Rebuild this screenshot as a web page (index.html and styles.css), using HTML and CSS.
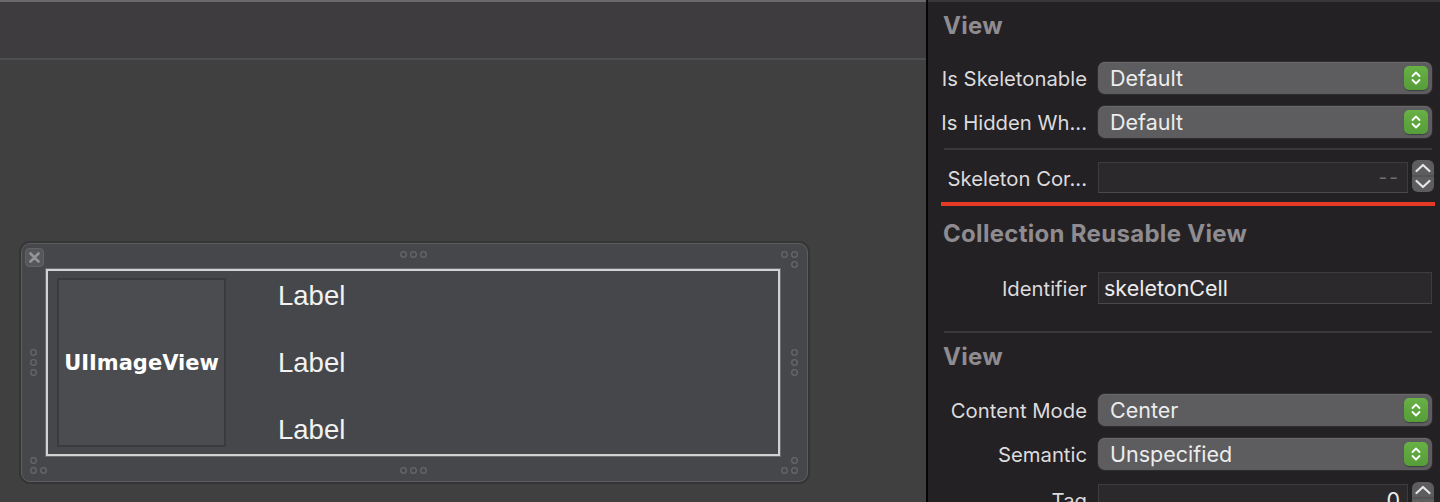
FILE: index.html
```html
<!DOCTYPE html>
<html>
<head>
<meta charset="utf-8">
<link rel="stylesheet" href="styles.css">
</head>
<body>
<div class="app">
  <div class="editor">
    <div class="toolbar"></div>
    <div class="canvas">
      <div class="cell">
        <div class="close">
          <svg width="19" height="19" viewBox="0 0 19 19"><path d="M5.5 5.5 L13.5 13.5 M13.5 5.5 L5.5 13.5" stroke="#939497" stroke-width="2.6" stroke-linecap="round"/></svg>
        </div>
        <svg class="handles" width="787" height="239" viewBox="0 0 787 239">
          <g fill="none" stroke="#65676a" stroke-width="1.3">
            <circle cx="382.5" cy="11.5" r="2.8"/><circle cx="392.5" cy="11.5" r="2.8"/><circle cx="402.5" cy="11.5" r="2.8"/>
            <circle cx="382.5" cy="227.5" r="2.8"/><circle cx="392.5" cy="227.5" r="2.8"/><circle cx="402.5" cy="227.5" r="2.8"/>
            <circle cx="12.5" cy="109.5" r="2.8"/><circle cx="12.5" cy="119.5" r="2.8"/><circle cx="12.5" cy="129.5" r="2.8"/>
            <circle cx="12.5" cy="217.5" r="2.8"/><circle cx="12.5" cy="227.5" r="2.8"/><circle cx="22.5" cy="227.5" r="2.8"/>
            <circle cx="763.5" cy="11.5" r="2.8"/><circle cx="773.5" cy="11.5" r="2.8"/><circle cx="773.5" cy="21.5" r="2.8"/>
            <circle cx="773.5" cy="109.5" r="2.8"/><circle cx="773.5" cy="119.5" r="2.8"/><circle cx="773.5" cy="129.5" r="2.8"/>
            <circle cx="773.5" cy="217.5" r="2.8"/><circle cx="763.5" cy="227.5" r="2.8"/><circle cx="773.5" cy="227.5" r="2.8"/>
          </g>
        </svg>
        <div class="content">
          <div class="imageview">UIImageView</div>
          <div class="labels">
            <div class="label">Label</div>
            <div class="label">Label</div>
            <div class="label">Label</div>
          </div>
        </div>
      </div>
    </div>
  </div>
  <div class="divider"></div>
  <div class="inspector">
    <div class="hdr hdr1">View</div>
    <div class="row mt14">
      <div class="lbl">Is Skeletonable</div>
      <div class="popup"><span>Default</span><span class="green"><svg width="24" height="24" viewBox="0 0 24 24"><path d="M8.5 10 L12 6.5 L15.5 10 M8.5 14 L12 17.5 L15.5 14" fill="none" stroke="#fff" stroke-width="1.8" stroke-linecap="round" stroke-linejoin="round"/></svg></span></div>
    </div>
    <div class="row mt12">
      <div class="lbl">Is Hidden Wh...</div>
      <div class="popup"><span>Default</span><span class="green"><svg width="24" height="24" viewBox="0 0 24 24"><path d="M8.5 10 L12 6.5 L15.5 10 M8.5 14 L12 17.5 L15.5 14" fill="none" stroke="#fff" stroke-width="1.8" stroke-linecap="round" stroke-linejoin="round"/></svg></span></div>
    </div>
    <div class="sep sep1"></div>
    <div class="row row-step mt10">
      <div class="lbl">Skeleton Cor...</div>
      <div class="field numfield"><span class="dash">--</span></div>
      <div class="stepper"><svg width="22" height="32" viewBox="0 0 22 32"><path d="M4.5 11 L11 5 L17.5 11 M4.5 21 L11 27 L17.5 21" fill="none" stroke="#e6e6e6" stroke-width="2.2" stroke-linecap="round" stroke-linejoin="round"/><path d="M0 16 H22" stroke="#4a494c" stroke-width="1"/></svg></div>
    </div>
    <div class="redline"></div>
    <div class="hdr hdr2">Collection Reusable View</div>
    <div class="row mt12">
      <div class="lbl">Identifier</div>
      <div class="field textfield">skeletonCell</div>
    </div>
    <div class="sep sep2"></div>
    <div class="hdr hdr3">View</div>
    <div class="row mt14">
      <div class="lbl">Content Mode</div>
      <div class="popup"><span>Center</span><span class="green"><svg width="24" height="24" viewBox="0 0 24 24"><path d="M8.5 10 L12 6.5 L15.5 10 M8.5 14 L12 17.5 L15.5 14" fill="none" stroke="#fff" stroke-width="1.8" stroke-linecap="round" stroke-linejoin="round"/></svg></span></div>
    </div>
    <div class="row mt12">
      <div class="lbl">Semantic</div>
      <div class="popup"><span>Unspecified</span><span class="green"><svg width="24" height="24" viewBox="0 0 24 24"><path d="M8.5 10 L12 6.5 L15.5 10 M8.5 14 L12 17.5 L15.5 14" fill="none" stroke="#fff" stroke-width="1.8" stroke-linecap="round" stroke-linejoin="round"/></svg></span></div>
    </div>
    <div class="row row-step mt12">
      <div class="lbl">Tag</div>
      <div class="field numfield"><span class="num">0</span></div>
      <div class="stepper"><svg width="22" height="32" viewBox="0 0 22 32"><path d="M4.5 11 L11 5 L17.5 11 M4.5 21 L11 27 L17.5 21" fill="none" stroke="#e6e6e6" stroke-width="2.2" stroke-linecap="round" stroke-linejoin="round"/><path d="M0 16 H22" stroke="#4a494c" stroke-width="1"/></svg></div>
    </div>
  </div>
</div>
</body>
</html>
```
FILE: styles.css
```css
* { box-sizing: border-box; }
html, body { margin: 0; padding: 0; }
body {
  width: 1440px;
  height: 502px;
  overflow: hidden;
  background: #242124;
  font-family: Inter, "Liberation Sans", sans-serif;
}
.app {
  display: flex;
  width: 1440px;
  height: 502px;
}
.editor {
  width: 926px;
  display: flex;
  flex-direction: column;
  background: #404040;
}
.toolbar {
  height: 60px;
  flex: none;
  background: #3e3c3f;
  border-top: 2px solid #6a686b;
  border-bottom: 2px solid #4e4d4f;
}
.canvas {
  flex: 1;
  padding-left: 21px;
  padding-top: 183px;
}
.cell {
  position: relative;
  width: 787px;
  height: 239px;
  background: #45474b;
  border: 1px solid #5b5d60;
  border-radius: 9px;
  box-shadow: 0 0 0 2px #353535;
  padding: 25px 27px 25px 24px;
}
.close {
  position: absolute;
  left: 3px;
  top: 4px;
  width: 19px;
  height: 19px;
  border-radius: 4px;
  background: #55575a;
  border: 1px solid #616366;
  display: flex;
  align-items: center;
  justify-content: center;
}
.close svg { display: block; margin: -1px; }
.handles {
  position: absolute;
  left: -1px;
  top: -1px;
}
.content {
  width: 734px;
  height: 187px;
  border: 2px solid #d2d2d2;
  box-shadow: 0 0 0 1px #6b6c6f;
  display: flex;
  padding: 7px 9px;
}
.imageview {
  width: 169px;
  height: 169px;
  background: #4a4c50;
  border: 2px solid #393b3e;
  display: flex;
  align-items: center;
  justify-content: center;
  font-family: "DejaVu Sans", sans-serif;
  font-weight: bold;
  font-size: 21px;
  color: #ffffff;
  padding-top: 1px;
}
.labels {
  margin-left: 52px;
  padding-top: 1px;
  height: 169px;
  display: flex;
  flex-direction: column;
  justify-content: space-between;
}
.label {
  height: 34px;
  line-height: 34px;
  font-family: "Liberation Sans", Arial, sans-serif;
  font-size: 27.5px;
  color: #f2f2f2;
}
.divider {
  width: 2px;
  background: #050505;
}
.inspector {
  width: 512px;
  border-top: 2px solid #39373a;
  display: flex;
  flex-direction: column;
}
.inspector > * { flex: none; }
.hdr {
  display: flex;
  align-items: center;
  padding-left: 15px;
  font-weight: 700;
  font-size: 24px;
  letter-spacing: 0.3px;
  color: #8e8c90;
}
.hdr1 { height: 46px; }
.hdr2 { height: 54px; }
.hdr3 { height: 47px; }
.row {
  display: flex;
  align-items: center;
  height: 32px;
}
.mt10 { margin-top: 10px; }
.mt12 { margin-top: 12px; }
.mt14 { margin-top: 14px; }
.lbl {
  width: 170px;
  padding-right: 11px;
  text-align: right;
  font-size: 20.3px;
  color: #dcdbdd;
  white-space: nowrap;
}
.popup {
  width: 334px;
  height: 32px;
  border-radius: 7px;
  background: #5d5c5f;
  box-shadow: inset 0 1px 0 #6a696c, 0 0 0 1px #2e2c2f;
  display: flex;
  align-items: center;
  padding-left: 12px;
  padding-right: 4px;
  font-size: 21.5px;
  color: #ececec;
}
.green {
  margin-left: auto;
  width: 24px;
  height: 24px;
  border-radius: 5px;
  background: linear-gradient(#67b146, #559d38);
  box-shadow: 0 1px 1px rgba(0,0,0,0.35);
}
.green svg { display: block; }
.sep {
  height: 2px;
  background: #3a383b;
  margin-left: 16px;
  margin-right: 8px;
}
.sep1 { margin-top: 10px; }
.sep2 { margin-top: 27px; }
.row-step {
  height: 33px;
  align-items: stretch;
}
.row-step .lbl {
  align-self: center;
  padding-top: 4px;
}
.field {
  background: #2c292c;
  border: 1px solid #3e3c3f;
  border-bottom-color: #4a484b;
}
.numfield {
  width: 310px;
  height: 31px;
  align-self: flex-end;
  display: flex;
  align-items: center;
  justify-content: flex-end;
  padding-right: 7px;
}
.dash {
  font-size: 19px;
  color: #6f6d70;
  letter-spacing: 2px;
}
.num {
  font-size: 21.5px;
  color: #ececec;
}
.stepper {
  margin-left: 4px;
  width: 22px;
  height: 32px;
  border-radius: 6px;
  background: #5d5c5f;
  align-self: flex-start;
}
.stepper svg { display: block; }
.textfield {
  width: 334px;
  height: 32px;
  display: flex;
  align-items: center;
  padding-left: 5px;
  font-size: 21.5px;
  color: #ececec;
}
.redline {
  height: 4px;
  margin-top: 9px;
  margin-left: 13px;
  margin-right: 5px;
  background: #e53a24;
}
```
